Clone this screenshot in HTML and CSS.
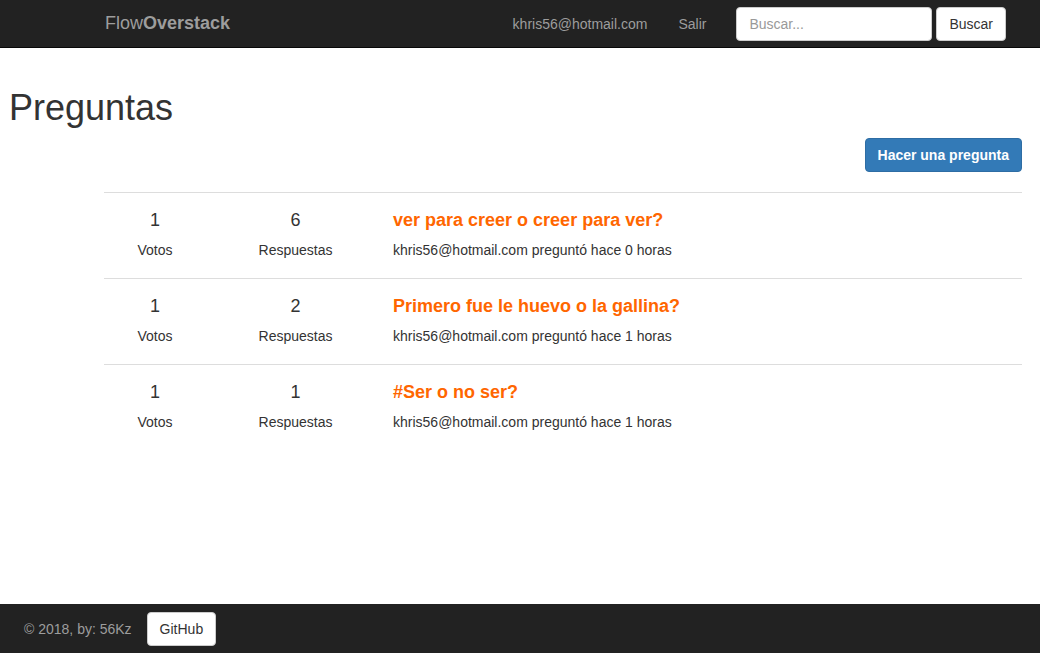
FILE: index.html
```html
<!DOCTYPE html>
<html lang="es">
<head>
<meta charset="utf-8">
<title>FlowOverstack</title>
<link rel="stylesheet" href="styles.css">
</head>
<body>
<nav class="navbar">
  <a class="brand" href="#">Flow<b>Overstack</b></a>
  <div class="navbar-right">
    <ul class="nav">
      <li><a href="#">khris56@hotmail.com</a></li>
      <li><a href="#">Salir</a></li>
    </ul>
    <form class="search">
      <input class="search-input" type="text" placeholder="Buscar...">
      <button class="btn btn-default" type="button">Buscar</button>
    </form>
  </div>
</nav>

<main class="main">
  <h1 class="page-title">Preguntas</h1>
  <div class="toolbar">
    <button class="btn btn-primary" type="button">Hacer una pregunta</button>
  </div>
  <div class="questions">
    <div class="question">
      <div class="stat"><div class="stat-num">1</div><div class="stat-label">Votos</div></div>
      <div class="stat"><div class="stat-num">6</div><div class="stat-label">Respuestas</div></div>
      <div class="q-body"><a class="q-title" href="#">ver para creer o creer para ver?</a><div class="q-meta">khris56@hotmail.com preguntó hace 0 horas</div></div>
    </div>
    <div class="question">
      <div class="stat"><div class="stat-num">1</div><div class="stat-label">Votos</div></div>
      <div class="stat"><div class="stat-num">2</div><div class="stat-label">Respuestas</div></div>
      <div class="q-body"><a class="q-title" href="#">Primero fue le huevo o la gallina?</a><div class="q-meta">khris56@hotmail.com preguntó hace 1 horas</div></div>
    </div>
    <div class="question">
      <div class="stat"><div class="stat-num">1</div><div class="stat-label">Votos</div></div>
      <div class="stat"><div class="stat-num">1</div><div class="stat-label">Respuestas</div></div>
      <div class="q-body"><a class="q-title" href="#">#Ser o no ser?</a><div class="q-meta">khris56@hotmail.com preguntó hace 1 horas</div></div>
    </div>
  </div>
</main>

<footer class="footer">
  <span class="footer-text">© 2018, by: 56Kz</span>
  <button class="btn btn-default" type="button">GitHub</button>
</footer>
</body>
</html>
```

FILE: styles.css
```css
* { box-sizing: border-box; }

html, body { height: 100%; }

body {
  margin: 0;
  font-family: "Liberation Sans", Arial, sans-serif;
  font-size: 14px;
  line-height: 20px;
  color: #333;
  background: #fff;
  display: flex;
  flex-direction: column;
  min-height: 100vh;
}

a { text-decoration: none; }

/* Navbar */
.navbar {
  height: 48px;
  background: #222;
  border-bottom: 1px solid #080808;
  display: flex;
  align-items: center;
  justify-content: space-between;
  padding: 0 19px 0 90px;
  flex-shrink: 0;
}

.brand {
  padding: 0 15px;
  font-size: 18px;
  line-height: 20px;
  color: #9d9d9d;
  margin-top: -2px;
}

.brand b { font-weight: bold; }

.navbar-right {
  display: flex;
  align-items: center;
}

.nav {
  list-style: none;
  margin: 0;
  padding: 0;
  display: flex;
}

.nav a {
  display: block;
  padding: 0 15px;
  color: #9d9d9d;
  font-size: 14px;
  line-height: 20px;
}

.nav li:last-child a { padding-left: 16px; }

.search {
  display: flex;
  align-items: center;
  gap: 4px;
  padding: 0 15px;
  margin: 0;
}

.search-input {
  width: 196px;
  height: 34px;
  padding: 6px 12px;
  font-family: inherit;
  font-size: 14px;
  line-height: 20px;
  color: #555;
  background: #fff;
  border: 1px solid #ccc;
  border-radius: 4px;
  outline: none;
}

.search-input::placeholder { color: #999; }

/* Buttons */
.btn {
  display: inline-block;
  height: 34px;
  padding: 6px 12px;
  font-family: inherit;
  font-size: 14px;
  line-height: 20px;
  border: 1px solid transparent;
  border-radius: 4px;
  cursor: pointer;
  white-space: nowrap;
}

.btn-default {
  color: #333;
  background: #fff;
  border-color: #ccc;
}

.btn-primary {
  color: #fff;
  background: #337ab7;
  border-color: #2e6da4;
  font-weight: bold;
}

/* Main */
.main {
  flex: 1 0 auto;
  padding: 40px 18px 0 8px;
}

.page-title {
  margin: 0;
  font-size: 36px;
  line-height: 40px;
  font-weight: normal;
  color: #333;
  padding-left: 1px;
}

.toolbar {
  display: flex;
  justify-content: flex-end;
  margin-top: 10px;
}

.questions {
  margin: 20px 0 0 96px;
}

.question {
  display: grid;
  grid-template-columns: 102px 179px 1fr;
  border-top: 1px solid #ddd;
  padding: 17px 0 18px;
}

.stat { text-align: center; }

.stat-num {
  font-size: 18px;
  line-height: 20px;
}

.stat-label,
.q-meta {
  margin-top: 10px;
  font-size: 14px;
  line-height: 20px;
}

.q-body { padding-left: 8px; }

.q-title {
  display: block;
  font-size: 18px;
  line-height: 20px;
  font-weight: bold;
  color: #ff6600;
}

/* Footer */
.footer {
  flex-shrink: 0;
  height: 49px;
  background: #222;
  display: flex;
  align-items: center;
  padding-left: 24px;
}

.footer-text {
  color: #9d9d9d;
  margin-right: 15px;
}
```
